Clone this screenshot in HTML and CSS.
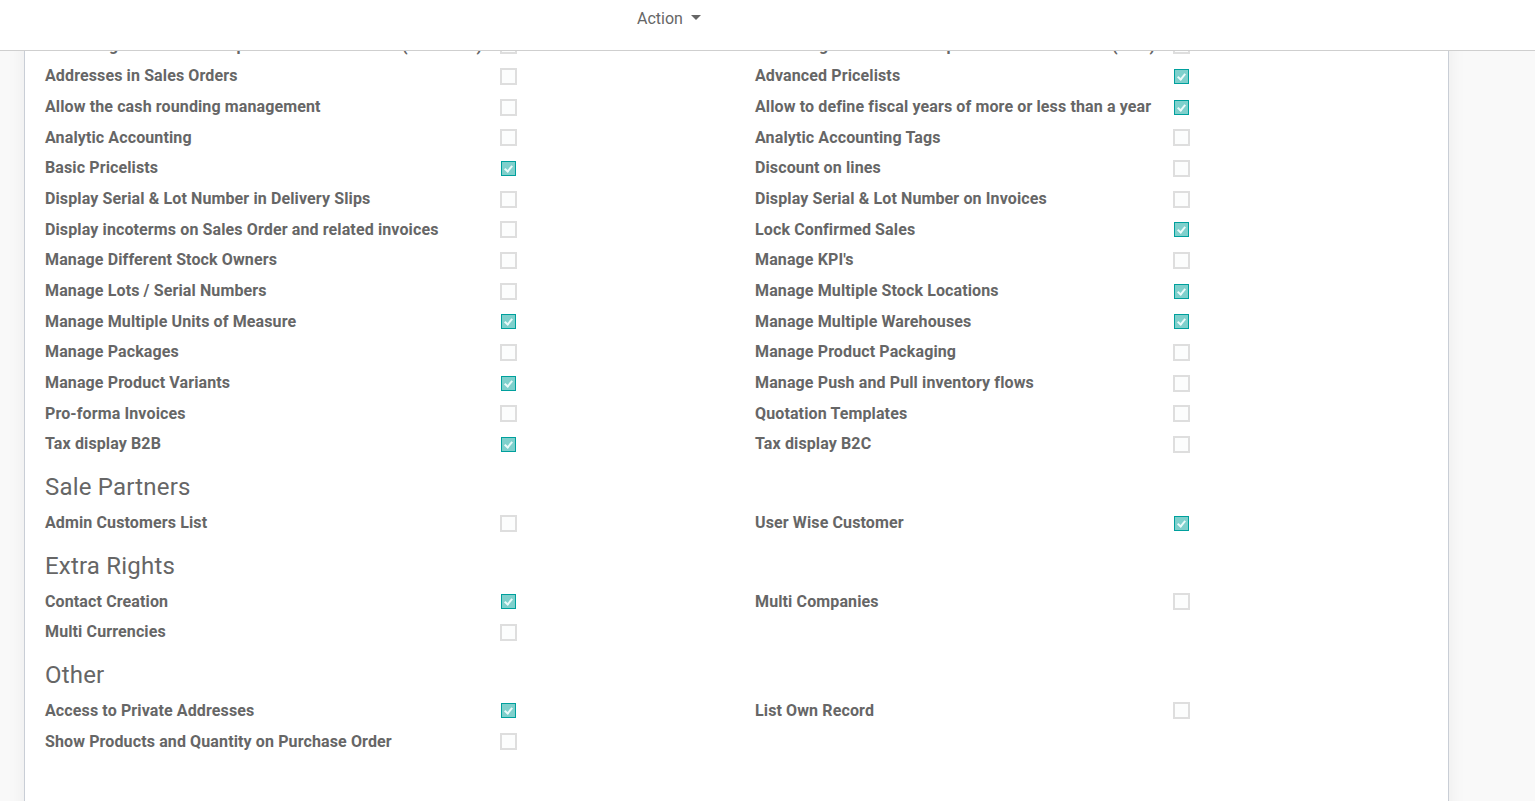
FILE: index.html
```html
<!DOCTYPE html>
<html>
<head>
<meta charset="utf-8">
<link rel="stylesheet" href="styles.css">
</head>
<body>
<header class="topbar">
  <button class="action-btn">Action <span class="caret"></span></button>
</header>
<div class="viewport">
  <div class="scroller">
    <div class="sheet">
      <div class="grid">
        <div class="lbl">A warning can be set on a product or a customer (Purchase)</div><div class="cb"><span class="box"></span></div>
        <div class="lbl">A warning can be set on a product or a customer (Sale)</div><div class="cb"><span class="box"></span></div>

        <div class="lbl">Addresses in Sales Orders</div><div class="cb"><span class="box"></span></div>
        <div class="lbl">Advanced Pricelists</div><div class="cb"><span class="box on"></span></div>

        <div class="lbl">Allow the cash rounding management</div><div class="cb"><span class="box"></span></div>
        <div class="lbl">Allow to define fiscal years of more or less than a year</div><div class="cb"><span class="box on"></span></div>

        <div class="lbl">Analytic Accounting</div><div class="cb"><span class="box"></span></div>
        <div class="lbl">Analytic Accounting Tags</div><div class="cb"><span class="box"></span></div>

        <div class="lbl">Basic Pricelists</div><div class="cb"><span class="box on"></span></div>
        <div class="lbl">Discount on lines</div><div class="cb"><span class="box"></span></div>

        <div class="lbl">Display Serial &amp; Lot Number in Delivery Slips</div><div class="cb"><span class="box"></span></div>
        <div class="lbl">Display Serial &amp; Lot Number on Invoices</div><div class="cb"><span class="box"></span></div>

        <div class="lbl">Display incoterms on Sales Order and related invoices</div><div class="cb"><span class="box"></span></div>
        <div class="lbl">Lock Confirmed Sales</div><div class="cb"><span class="box on"></span></div>

        <div class="lbl">Manage Different Stock Owners</div><div class="cb"><span class="box"></span></div>
        <div class="lbl">Manage KPI's</div><div class="cb"><span class="box"></span></div>

        <div class="lbl">Manage Lots / Serial Numbers</div><div class="cb"><span class="box"></span></div>
        <div class="lbl">Manage Multiple Stock Locations</div><div class="cb"><span class="box on"></span></div>

        <div class="lbl">Manage Multiple Units of Measure</div><div class="cb"><span class="box on"></span></div>
        <div class="lbl">Manage Multiple Warehouses</div><div class="cb"><span class="box on"></span></div>

        <div class="lbl">Manage Packages</div><div class="cb"><span class="box"></span></div>
        <div class="lbl">Manage Product Packaging</div><div class="cb"><span class="box"></span></div>

        <div class="lbl">Manage Product Variants</div><div class="cb"><span class="box on"></span></div>
        <div class="lbl">Manage Push and Pull inventory flows</div><div class="cb"><span class="box"></span></div>

        <div class="lbl">Pro-forma Invoices</div><div class="cb"><span class="box"></span></div>
        <div class="lbl">Quotation Templates</div><div class="cb"><span class="box"></span></div>

        <div class="lbl">Tax display B2B</div><div class="cb"><span class="box on"></span></div>
        <div class="lbl">Tax display B2C</div><div class="cb"><span class="box"></span></div>
      </div>

      <h2 class="sep">Sale Partners</h2>
      <div class="grid">
        <div class="lbl">Admin Customers List</div><div class="cb"><span class="box"></span></div>
        <div class="lbl">User Wise Customer</div><div class="cb"><span class="box on"></span></div>
      </div>

      <h2 class="sep">Extra Rights</h2>
      <div class="grid">
        <div class="lbl">Contact Creation</div><div class="cb"><span class="box on"></span></div>
        <div class="lbl">Multi Companies</div><div class="cb"><span class="box"></span></div>
        <div class="lbl">Multi Currencies</div><div class="cb"><span class="box"></span></div>
        <div class="lbl"></div><div class="cb"></div>
      </div>

      <h2 class="sep">Other</h2>
      <div class="grid">
        <div class="lbl">Access to Private Addresses</div><div class="cb"><span class="box on"></span></div>
        <div class="lbl">List Own Record</div><div class="cb"><span class="box"></span></div>
        <div class="lbl">Show Products and Quantity on Purchase Order</div><div class="cb"><span class="box"></span></div>
        <div class="lbl"></div><div class="cb"></div>
      </div>
    </div>
  </div>
</div>
</body>
</html>
```

FILE: styles.css
```css
html, body {
  margin: 0;
  padding: 0;
  height: 100%;
}
body {
  font-family: Roboto, "Noto Sans", sans-serif;
  color: #666666;
  background: #ffffff;
  display: flex;
  flex-direction: column;
  overflow: hidden;
}
.topbar {
  height: 50px;
  flex: 0 0 50px;
  background: #ffffff;
  border-bottom: 1px solid #cfcfcf;
  display: flex;
  justify-content: flex-start;
  align-items: flex-start;
  padding-left: 637px;
}
.action-btn {
  margin-top: 7px;
  background: none;
  border: none;
  font-family: Roboto, sans-serif;
  font-size: 16px;
  color: #666666;
  padding: 0;
  display: flex;
  align-items: center;
  gap: 8px;
  height: 22px;
}
.caret {
  width: 0;
  height: 0;
  border-left: 5px solid transparent;
  border-right: 5px solid transparent;
  border-top: 5px solid #666666;
  margin-top: -2px;
}
.viewport {
  flex: 1;
  overflow: hidden;
  background: #f9f9f9;
}
.scroller {
  margin-top: -21px;
  padding-left: 24px;
  padding-right: 86px;
  height: 900px;
}
.sheet {
  background: #ffffff;
  border-left: 1px solid #c9ced6;
  border-right: 1px solid #c9ced6;
  box-shadow: 0 0 18px rgba(0,0,0,0.06);
  padding-left: 20px;
  height: 100%;
  box-sizing: border-box;
}
.grid {
  display: grid;
  grid-template-columns: 455px 255px 418px auto;
  grid-auto-rows: 30.67px;
}
.lbl {
  font-size: 16px;
  font-weight: 700;
  color: #666666;
  display: flex;
  align-items: center;
  white-space: nowrap;
  letter-spacing: 0.12px;
}
.cb {
  display: flex;
  align-items: center;
  padding-top: 1px;
}
.box {
  width: 17px;
  height: 17px;
  box-sizing: border-box;
  border: 2px solid #dedede;
  background: #fcfdfd;
  display: block;
  position: relative;
}
.box.on {
  width: 15px;
  height: 15px;
  margin-left: 1px;
  border: 1px solid #00a09d;
  background: #7fd0cc;
}
.box.on::after {
  content: "";
  position: absolute;
  left: 4px;
  top: 2px;
  width: 3px;
  height: 6px;
  border-right: 2px solid #eafaf9;
  border-bottom: 2px solid #eafaf9;
  transform: rotate(40deg);
}
.sep {
  margin: 0;
  padding-top: 14px;
  padding-bottom: 6px;
  height: 28px;
  line-height: 28px;
  font-size: 24px;
  font-weight: 400;
  letter-spacing: 0.2px;
  color: #666666;
  box-sizing: content-box;
}
```
